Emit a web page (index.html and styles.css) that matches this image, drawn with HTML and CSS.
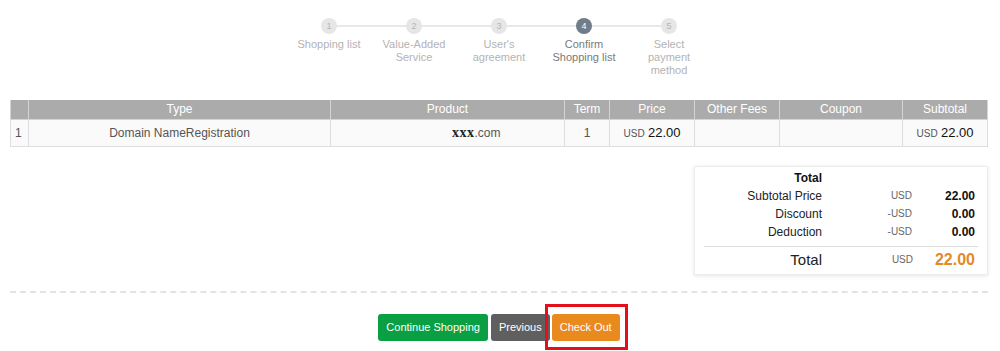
FILE: index.html
```html
<!DOCTYPE html>
<html>
  <head>
    <link rel="stylesheet" href="styles.css">
  </head>
  <body>
    <div class="page">
      <ol class="steps">
        <li class="step"><span class="step-num">1</span><span class="step-label">Shopping list</span></li>
        <li class="step"><span class="step-num">2</span><span class="step-label">Value-Added Service</span></li>
        <li class="step"><span class="step-num">3</span><span class="step-label">User's agreement</span></li>
        <li class="step active"><span class="step-num">4</span><span class="step-label">Confirm Shopping list</span></li>
        <li class="step"><span class="step-num">5</span><span class="step-label">Select payment method</span></li>
      </ol>

      <table class="cart">
        <colgroup>
          <col style="width: 18px">
          <col style="width: 302px">
          <col style="width: 234px">
          <col style="width: 45px">
          <col style="width: 85px">
          <col style="width: 85px">
          <col style="width: 123px">
          <col>
        </colgroup>
        <thead>
          <tr>
            <th></th>
            <th>Type</th>
            <th>Product</th>
            <th>Term</th>
            <th>Price</th>
            <th>Other Fees</th>
            <th>Coupon</th>
            <th>Subtotal</th>
          </tr>
        </thead>
        <tbody>
          <tr>
            <td class="num">1</td>
            <td>Domain NameRegistration</td>
            <td class="product"><b class="domain">xxx</b>.com</td>
            <td>1</td>
            <td><span class="cur">USD</span> <span class="amt">22.00</span></td>
            <td></td>
            <td></td>
            <td><span class="cur">USD</span> <span class="amt">22.00</span></td>
          </tr>
        </tbody>
      </table>

      <div class="summary-wrap">
        <div class="summary">
          <div class="summary-row">
            <span class="s-label strong">Total</span><span></span><span></span>
          </div>
          <div class="summary-row">
            <span class="s-label">Subtotal Price</span><span class="s-cur">USD</span><span class="s-val">22.00</span>
          </div>
          <div class="summary-row">
            <span class="s-label">Discount</span><span class="s-cur">-USD</span><span class="s-val">0.00</span>
          </div>
          <div class="summary-row">
            <span class="s-label">Deduction</span><span class="s-cur">-USD</span><span class="s-val">0.00</span>
          </div>
          <div class="summary-row grand">
            <span class="s-label">Total</span><span class="s-cur">USD</span><span class="s-val">22.00</span>
          </div>
        </div>
      </div>

      <div class="actions">
        <button class="btn btn-green">Continue Shopping</button>
        <button class="btn btn-gray">Previous</button>
        <span class="highlight"><button class="btn btn-orange">Check Out</button></span>
      </div>
    </div>
  </body>
</html>
```

FILE: styles.css
```css
* {
  margin: 0;
  padding: 0;
  box-sizing: border-box;
}

body {
  background: #fff;
  font-family: "Liberation Sans", Arial, sans-serif;
  font-size: 12px;
  color: #555;
}

.page {
  width: 1000px;
  padding: 18px 12px 11px 10px;
}

/* steps */
.steps {
  list-style: none;
  display: flex;
  justify-content: center;
}

.step {
  width: 85px;
  display: flex;
  flex-direction: column;
  align-items: center;
  position: relative;
  text-align: center;
}

.step + .step::before {
  content: "";
  position: absolute;
  top: 7px;
  left: -50%;
  width: 100%;
  height: 2px;
  background: #e8e8e8;
}

.step-num {
  position: relative;
  z-index: 1;
  width: 16px;
  height: 16px;
  border-radius: 50%;
  background: #e6e6e6;
  color: #b5b5b5;
  font-size: 9px;
  line-height: 16px;
}

.step-label {
  margin-top: 4px;
  width: 70px;
  font-size: 11px;
  line-height: 13px;
  color: #b3b3b3;
}

.step.active .step-num {
  background: #717c88;
  color: #fff;
}

.step.active .step-label {
  color: #7a7a7a;
}

/* table */
.cart {
  width: 100%;
  margin-top: 23px;
  border-collapse: collapse;
  table-layout: fixed;
}

.cart th {
  background: #ababab;
  color: #fff;
  font-weight: normal;
  font-size: 12px;
  height: 19px;
  border: 1px solid #d4d4d4;
  border-top: none;
}

.cart td {
  background: #fafafa;
  height: 27px;
  border: 1px solid #dedede;
  text-align: center;
  font-size: 12px;
  color: #555;
}

.cart td.num {
  text-align: left;
  padding-left: 4px;
}

.cart td.product {
  text-align: left;
  padding-left: 121px;
}

.domain {
  font-family: "Liberation Serif", "Times New Roman", serif;
  font-size: 14px;
  letter-spacing: 0.5px;
  color: #222;
}

.cur {
  font-size: 10px;
  color: #555;
}

.amt {
  font-size: 13px;
  color: #111;
}

/* summary */
.summary-wrap {
  display: flex;
  justify-content: flex-end;
  margin-top: 19px;
}

.summary {
  width: 294px;
  padding: 2px 12px 2px 8px;
  border: 1px solid #ececec;
  box-shadow: 0 1px 4px rgba(0, 0, 0, 0.1);
}

.summary-row {
  display: grid;
  grid-template-columns: 119px 90px 1fr;
  height: 18px;
  align-items: center;
  text-align: right;
}

.s-label {
  color: #222;
  font-size: 12px;
}

.s-label.strong {
  font-weight: bold;
  color: #111;
}

.s-cur {
  font-size: 10px;
  color: #666;
}

.s-val {
  font-weight: bold;
  color: #111;
  font-size: 12px;
}

.summary-row.grand {
  height: 24px;
  margin-top: 5px;
  border-top: 1px solid #ddd;
  margin-left: 1px;
  margin-right: -3px;
  padding-right: 3px;
  box-sizing: content-box;
  padding-top: 1px;
}

.summary-row.grand .s-label {
  font-size: 15px;
  padding-right: 1px;
}

.summary-row.grand .s-val {
  font-size: 16px;
  color: #e38a28;
}

/* actions */
.actions {
  margin-top: 16px;
  border-top: 2px dashed #e3e3e3;
  padding-top: 21px;
  display: flex;
  justify-content: center;
  align-items: flex-start;
  gap: 3px;
}

.btn {
  display: block;
  height: 27px;
  padding: 0 8px;
  border: none;
  border-radius: 3px;
  color: #fff;
  font-family: "Liberation Sans", Arial, sans-serif;
  font-size: 11px;
}

.btn-green {
  background: #0b9f43;
}

.btn-gray {
  background: #5f5f5f;
}

.btn-orange {
  background: #e98a1f;
}

.highlight {
  display: flex;
  position: relative;
  margin-left: -1px;
}

.highlight::after {
  content: "";
  position: absolute;
  top: -10px;
  bottom: -9px;
  left: -7px;
  right: -8px;
  border: 3px solid #e3101b;
  pointer-events: none;
}
```
